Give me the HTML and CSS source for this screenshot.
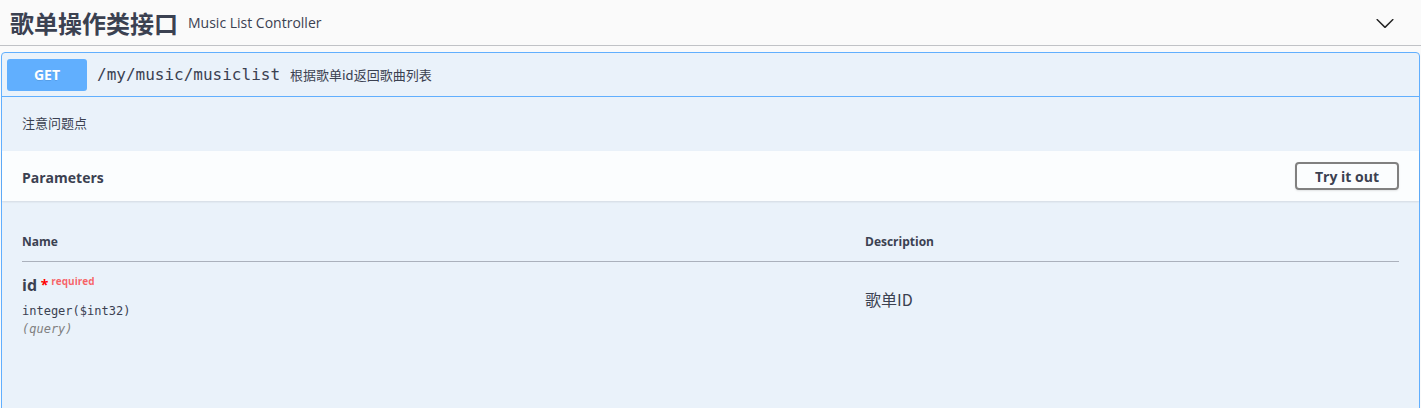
FILE: index.html
```html
<!DOCTYPE html>
<html lang="zh">
<head>
<meta charset="utf-8">
<title>Swagger</title>
<link rel="stylesheet" href="styles.css">
</head>
<body>
<div class="tag-section">
  <h3 class="opblock-tag">
    <span class="tag-name">歌单操作类接口</span>
    <small class="tag-desc">Music List Controller</small>
    <button class="expand" aria-label="collapse">
      <svg width="20" height="20" viewBox="0 0 20 20"><path d="M17.418 6.109c.272-.268.709-.268.979 0s.271.701 0 .969l-7.908 7.83c-.27.268-.707.268-.979 0l-7.908-7.83c-.27-.268-.27-.701 0-.969.271-.268.709-.268.979 0L10 13.25l7.418-7.141z" fill="#222"/></svg>
    </button>
  </h3>
  <div class="opblock">
    <div class="summary">
      <span class="method">GET</span>
      <span class="path">/my/music/musiclist</span>
      <span class="summary-desc">根据歌单id返回歌曲列表</span>
    </div>
    <div class="body">
      <div class="desc-wrapper"><p>注意问题点</p></div>
      <div class="section-header">
        <h4>Parameters</h4>
        <button class="try-out">Try it out</button>
      </div>
      <div class="params-wrapper">
        <table class="params">
          <thead>
            <tr><th class="col-name">Name</th><th class="col-desc">Description</th></tr>
          </thead>
          <tbody>
            <tr>
              <td class="col-name">
                <div class="param-name">id<span class="star">&nbsp;*</span><span class="req">required</span></div>
                <div class="param-type">integer($int32)</div>
                <div class="param-in">(query)</div>
              </td>
              <td class="col-desc"><p class="pdesc">歌单ID</p></td>
            </tr>
          </tbody>
        </table>
      </div>
    </div>
  </div>
</div>
</body>
</html>
```
FILE: styles.css
```css
* { box-sizing: border-box; }
html, body { margin: 0; padding: 0; }
body {
  background: #fafafa;
  color: #3b4151;
  font-family: "Open Sans", "Noto Sans CJK SC", sans-serif;
  height: 408px;
  overflow: hidden;
}
.opblock-tag {
  display: flex;
  align-items: center;
  margin: 0 0 6px;
  padding: 10px 20px 10px 10px;
  height: 46px;
  border-bottom: 1px solid rgba(59,65,81,.3);
  font-size: 24px;
  font-weight: 700;
  color: #3b4151;
}
.tag-name { font-family: "Noto Sans CJK SC", sans-serif; font-weight: 700; line-height: 1; }
.tag-desc {
  flex: 1;
  padding: 0 10px;
  font-size: 14px;
  font-weight: 400;
}
.expand {
  border: none;
  background: none;
  padding: 0;
  margin: 0 6px 0 0;
  width: 20px;
  height: 20px;
  display: flex;
}
.opblock {
  margin: 0 1px;
  border: 1px solid #61affe;
  border-radius: 4px;
  background: rgba(97,175,254,.1);
  height: 400px;
}
.summary {
  display: flex;
  align-items: center;
  padding: 5px;
  border-bottom: 1px solid #61affe;
  height: 44px;
}
.method {
  min-width: 80px;
  height: 32px;
  display: flex;
  align-items: center;
  justify-content: center;
  background: #61affe;
  color: #fff;
  border-radius: 3px;
  font-size: 14px;
  font-weight: 700;
  text-shadow: 0 1px 0 rgba(0,0,0,.1);
}
.path {
  padding: 0 10px;
  font-family: "DejaVu Sans Mono", monospace;
  font-size: 16px;
  color: #3b4151;
}
.summary-desc {
  font-size: 13px;
  font-family: "Noto Sans CJK SC", sans-serif;
  color: #3b4151;
}
.desc-wrapper {
  padding: 0 20px 4px;
  height: 54px;
  display: flex;
  align-items: center;
}
.desc-wrapper p {
  margin: 0;
  font-size: 13px;
  font-family: "Noto Sans CJK SC", sans-serif;
}
.section-header {
  display: flex;
  align-items: center;
  justify-content: space-between;
  min-height: 50px;
  padding: 9px 20px 7px;
  background: rgba(255,255,255,.8);
  box-shadow: 0 1px 2px rgba(0,0,0,.1);
}
.section-header h4 {
  margin: 0;
  font-size: 14px;
  font-weight: 700;
}
.try-out {
  width: 104px;
  height: 28px;
  margin-top: -2px;
  border: 2px solid #808080;
  border-radius: 4px;
  background: transparent;
  color: #3b4151;
  font-family: "Open Sans", sans-serif;
  font-size: 14px;
  font-weight: 700;
  padding: 0;
  box-shadow: 0 1px 2px rgba(0,0,0,.1);
}
.params-wrapper { padding: 21px 20px 20px; }
.params {
  width: 100%;
  border-collapse: collapse;
}
.params th {
  text-align: left;
  font-size: 12px;
  font-weight: 700;
  padding: 12px 0;
  line-height: 15px;
  border-bottom: 1px solid rgba(59,65,81,.2);
}
.params th.col-name, .params td.col-name { width: 843px; }
.params td {
  vertical-align: top;
  padding: 12px 0 10px;
}
.param-name {
  font-size: 16px;
  font-weight: 700;
  line-height: 22px;
}
.star { color: red; font-size: 14px; vertical-align: 1px; }
.req {
  font-size: 10px;
  color: rgba(255,0,0,.6);
  position: relative;
  top: -6px;
  padding: 0 0 0 3px;
  font-weight: 700;
}
.param-type {
  font-family: "DejaVu Sans Mono", monospace;
  font-size: 12px;
  padding: 6px 0 0;
  line-height: 15px;
}
.param-in {
  font-family: "DejaVu Sans Mono", monospace;
  font-size: 12px;
  font-style: italic;
  color: #808080;
  line-height: 21px;
}
.pdesc {
  margin: 14px 0 0;
  font-size: 16px;
  font-family: "Noto Sans CJK SC", sans-serif;
  line-height: 22px;
}
```
